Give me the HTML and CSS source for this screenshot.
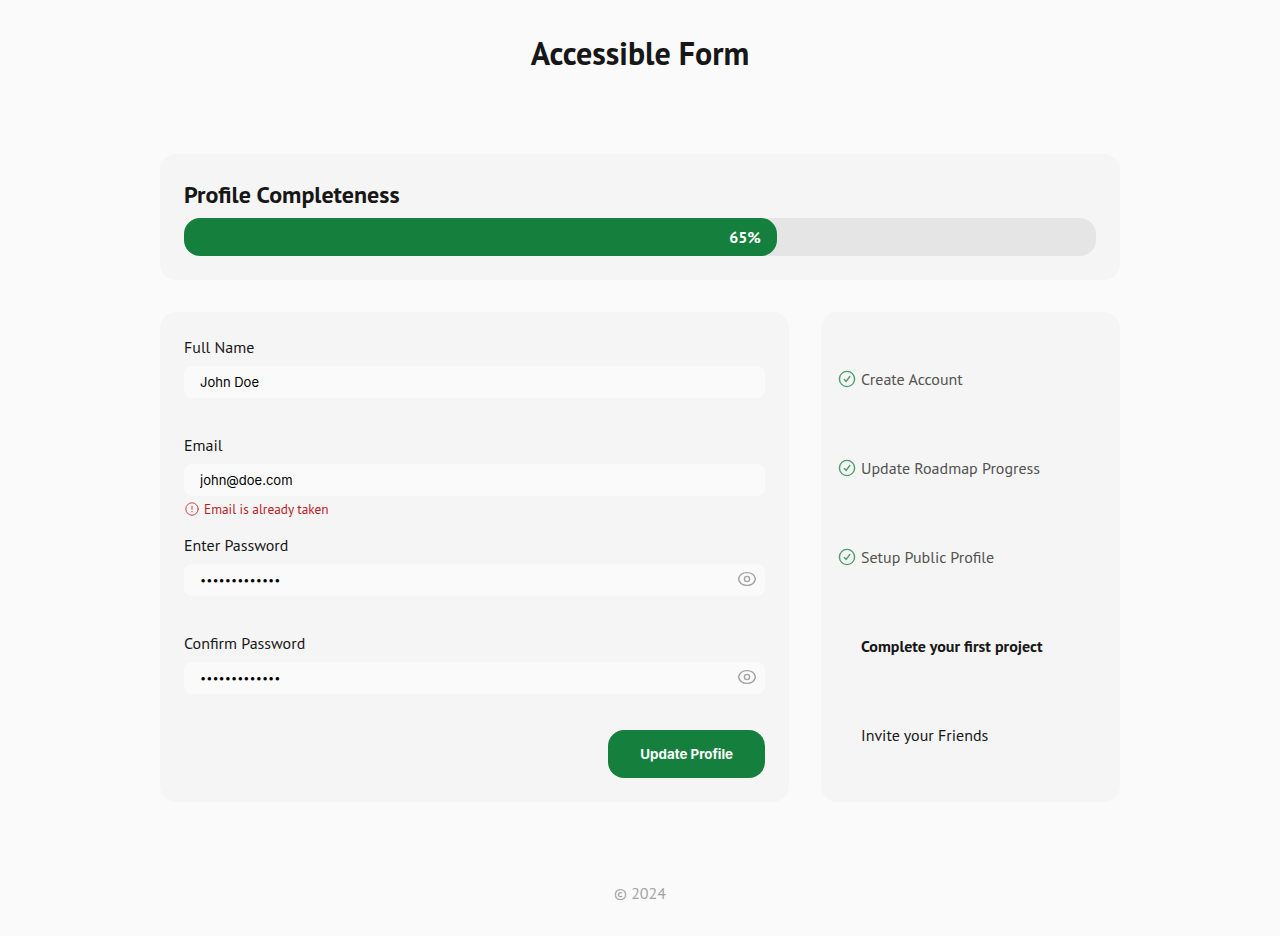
FILE: index.html
```html
<!DOCTYPE html>
<html lang="en">
<head>
<meta charset="utf-8">
<meta name="viewport" content="width=device-width, initial-scale=1">
<title>Accessible Form</title>
<link rel="stylesheet" href="styles.css">
</head>
<body>
<svg class="sprite" aria-hidden="true">
  <symbol id="check" viewBox="0 0 20 20"><circle cx="10" cy="10" r="7.6"/><path d="M7.3 10.5l1.9 1.9 3.6-4.9"/></symbol>
  <symbol id="eye" viewBox="0 0 20 20"><path d="M1.6 10C2.4 6 5.8 3.6 10 3.6S17.6 6 18.4 10C17.6 14 14.2 16.4 10 16.4S2.4 14 1.6 10Z"/><circle cx="10" cy="10" r="2.6"/></symbol>
  <symbol id="alert" viewBox="0 0 16 16"><circle cx="8" cy="8" r="6.2"/><path d="M8 5.2v3.2M8 10.4v.4"/></symbol>
</svg>
<header class="header"><h1 class="title">Accessible Form</h1></header>
<main class="main">
  <section class="card">
    <h2 class="subtitle" id="progress-title">Profile Completeness</h2>
    <div class="progress" role="progressbar" aria-labelledby="progress-title" aria-valuenow="65" aria-valuemin="0" aria-valuemax="100">
      <div class="progress-value" style="width: 65%">65%</div>
    </div>
  </section>
  <div class="columns">
    <form class="card form">
      <div class="field">
        <label class="label" for="name">Full Name</label>
        <input class="input" id="name" type="text" value="John Doe">
        <div class="helper"></div>
      </div>
      <div class="field">
        <label class="label" for="email">Email</label>
        <input class="input" id="email" type="email" value="john@doe.com" aria-invalid="true" aria-describedby="email-error">
        <div class="helper error" id="email-error"><svg class="icon-small" aria-hidden="true"><use href="#alert"/></svg>Email is already taken</div>
      </div>
      <div class="field">
        <label class="label" for="password">Enter Password</label>
        <div class="password">
          <input class="input secret" id="password" type="password" value="accessible123">
          <button class="toggle" type="button" aria-label="Show password"><svg class="icon" aria-hidden="true"><use href="#eye"/></svg></button>
        </div>
        <div class="helper"></div>
      </div>
      <div class="field">
        <label class="label" for="confirm">Confirm Password</label>
        <div class="password">
          <input class="input secret" id="confirm" type="password" value="accessible123">
          <button class="toggle" type="button" aria-label="Show password"><svg class="icon" aria-hidden="true"><use href="#eye"/></svg></button>
        </div>
        <div class="helper"></div>
      </div>
      <button class="submit" type="submit">Update Profile</button>
    </form>
    <aside class="card sidebar">
      <ul class="steps">
        <li class="step done"><svg class="icon" aria-hidden="true"><use href="#check"/></svg>Create Account</li>
        <li class="step done"><svg class="icon" aria-hidden="true"><use href="#check"/></svg>Update Roadmap Progress</li>
        <li class="step done"><svg class="icon" aria-hidden="true"><use href="#check"/></svg>Setup Public Profile</li>
        <li class="step current" aria-current="step">Complete your first project</li>
        <li class="step">Invite your Friends</li>
      </ul>
    </aside>
  </div>
</main>
<footer class="footer">© 2024</footer>
</body>
</html>
```
FILE: styles.css
```css
* { box-sizing: border-box; }
body {
  margin: 0;
  background: #fafafa;
  color: #171717;
  font: 16px/24px "PT Sans", Lato, sans-serif;
}
.sprite { position: absolute; width: 0; height: 0; }
.header { padding: 32px 16px 80px; text-align: center; }
.title { margin: 0; font-size: 32px; line-height: 42px; }
.main {
  display: grid;
  gap: 32px;
  width: 75%;
  margin: 0 auto;
}
.card {
  padding: 24px;
  border-radius: 16px;
  background: #f5f5f5;
}
.subtitle { margin: 0 0 6px; font-size: 24px; line-height: 34px; }
.progress { border-radius: 16px; background: #e5e5e5; }
.progress-value {
  padding: 7px 16px;
  border-radius: 16px;
  background: #15803d;
  color: #fff;
  font-weight: 700;
  text-align: right;
}
.columns {
  display: grid;
  grid-template-columns: 629fr 299fr;
  gap: 32px;
}
.form { display: flex; flex-direction: column; gap: 16px; }
.field { display: flex; flex-direction: column; }
.label { margin-bottom: 8px; line-height: 22px; }
.input {
  width: 100%;
  height: 32px;
  padding: 0 16px;
  border: 0;
  border-radius: 8px;
  background: #fafafa;
  color: #000;
  font: 13px Inter, sans-serif;
}
.secret { font-size: 11px; }
.helper {
  display: flex;
  align-items: center;
  gap: 4px;
  min-height: 16px;
  margin-top: 4px;
  font-size: smaller;
  line-height: 18px;
}
.error { color: #b91c1c; }
.password { display: grid; align-items: center; }
.password > * { grid-area: 1 / 1; }
.toggle {
  justify-self: end;
  display: flex;
  margin: 0 8px 2px 0;
  padding: 0;
  border: 0;
  background: none;
  color: #a3a3a3;
}
.icon, .icon-small {
  flex: none;
  width: 20px;
  height: 20px;
  fill: none;
  stroke: currentColor;
  stroke-width: 1.4;
  stroke-linecap: round;
  stroke-linejoin: round;
}
.icon-small { width: 16px; height: 16px; stroke-width: 1; opacity: .8; }
.submit {
  align-self: flex-end;
  height: 48px;
  padding: 0 32px;
  border: 0;
  border-radius: 16px;
  background: #15803d;
  color: #fff;
  font: 700 smaller Inter, sans-serif;
}
.sidebar { padding: 23px 24px 22px; }
.steps { margin: 0; padding: 0; list-style: none; }
.step {
  position: relative;
  padding: 32px 0 32px 16px;
  line-height: 25px;
}
.step .icon { position: absolute; left: -8px; top: 34px; opacity: .75; }
.done { color: #525252; }
.done .icon { color: #15803d; }
.current { font-weight: 700; }
.footer { padding: 80px 16px 32px; color: #a3a3a3; line-height: 22px; text-align: center; }
```
